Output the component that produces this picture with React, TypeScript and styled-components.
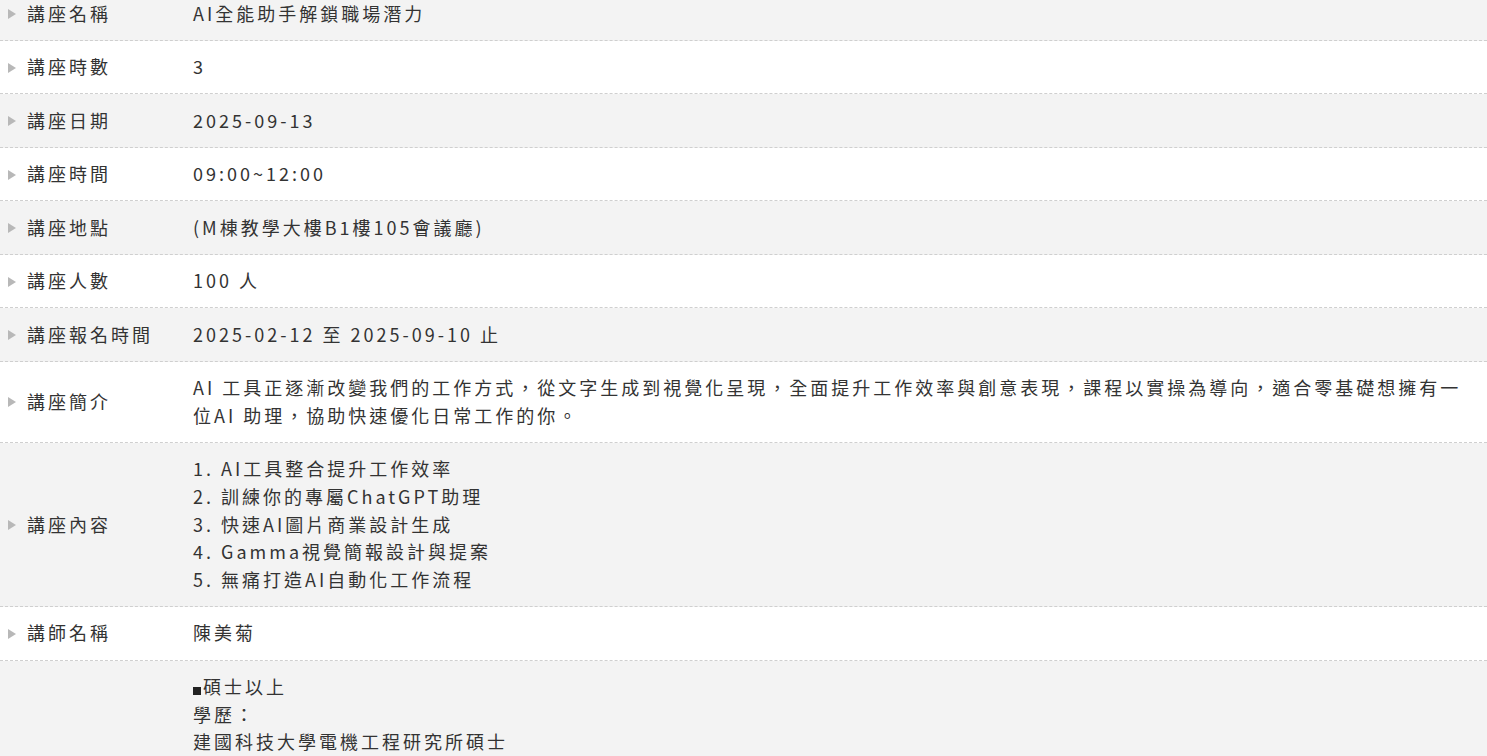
import React from "react";
import styled, { createGlobalStyle } from "styled-components";

const Global = createGlobalStyle`
  html, body { margin: 0; padding: 0; overflow: hidden; background: #fff; }
  body {
    font-family: "Noto Sans CJK TC", "Noto Sans", sans-serif;
    color: #333;
  }
`;

const Table = styled.div`
  margin-top: -12.6px;
  width: 100%;
`;

const Row = styled.div<{ $alt: boolean }>`
  display: grid;
  grid-template-columns: 193px 1fr;
  background: ${(p) => (p.$alt ? "#f3f3f3" : "#ffffff")};
  border-bottom: 1px dashed #cfcfcf;
  font-size: 18px;
  letter-spacing: 3px;
  line-height: 27.63px;
`;

const Label = styled.div`
  display: flex;
  align-items: center;
  padding: 12.44px 0 12.44px 8px;
  white-space: nowrap;
`;

const Arrow = styled.span`
  display: inline-block;
  width: 0;
  height: 0;
  border-top: 5px solid transparent;
  border-bottom: 5px solid transparent;
  border-left: 8px solid #b8b8b8;
  margin-right: 11px;
  margin-top: 1px;
`;

const Value = styled.div`
  padding: 12.44px 8px 12.44px 0;
`;

const Line = styled.div``;

const Bullet = styled.span`
  display: inline-block;
  width: 8px;
  height: 8px;
  background: #222;
  margin-right: 2px;
  vertical-align: -1px;
`;

type Item = { label: string; lines: React.ReactNode[] };

const items: Item[] = [
  { label: "講座名稱", lines: ["AI全能助手解鎖職場潛力"] },
  { label: "講座時數", lines: ["3"] },
  { label: "講座日期", lines: ["2025-09-13"] },
  { label: "講座時間", lines: ["09:00~12:00"] },
  { label: "講座地點", lines: ["(M棟教學大樓B1樓105會議廳)"] },
  { label: "講座人數", lines: ["100 人"] },
  { label: "講座報名時間", lines: ["2025-02-12 至 2025-09-10 止"] },
  {
    label: "講座簡介",
    lines: [
      "AI 工具正逐漸改變我們的工作方式，從文字生成到視覺化呈現，全面提升工作效率與創意表現，課程以實操為導向，適合零基礎想擁有一位AI 助理，協助快速優化日常工作的你。",
    ],
  },
  {
    label: "講座內容",
    lines: [
      "1. AI工具整合提升工作效率",
      "2. 訓練你的專屬ChatGPT助理",
      "3. 快速AI圖片商業設計生成",
      "4. Gamma視覺簡報設計與提案",
      "5. 無痛打造AI自動化工作流程",
    ],
  },
  { label: "講師名稱", lines: ["陳美菊"] },
  {
    label: "講師簡介",
    lines: [
      <>
        <Bullet />碩士以上
      </>,
      "學歷：",
      "建國科技大學電機工程研究所碩士",
      "經歷：",
      "企業AI應用講師",
      "數位行銷顧問",
      "職場效率培訓講師",
      "專長：",
      "AI工具應用、簡報設計",
    ],
  },
];

export default function App() {
  return (
    <>
      <Global />
      <Table>
        {items.map((it, i) => (
          <Row key={it.label} $alt={i % 2 === 0}>
            <Label>
              <Arrow />
              {it.label}
            </Label>
            <Value>
              {it.lines.map((l, j) => (
                <Line key={j}>{l}</Line>
              ))}
            </Value>
          </Row>
        ))}
      </Table>
    </>
  );
}
